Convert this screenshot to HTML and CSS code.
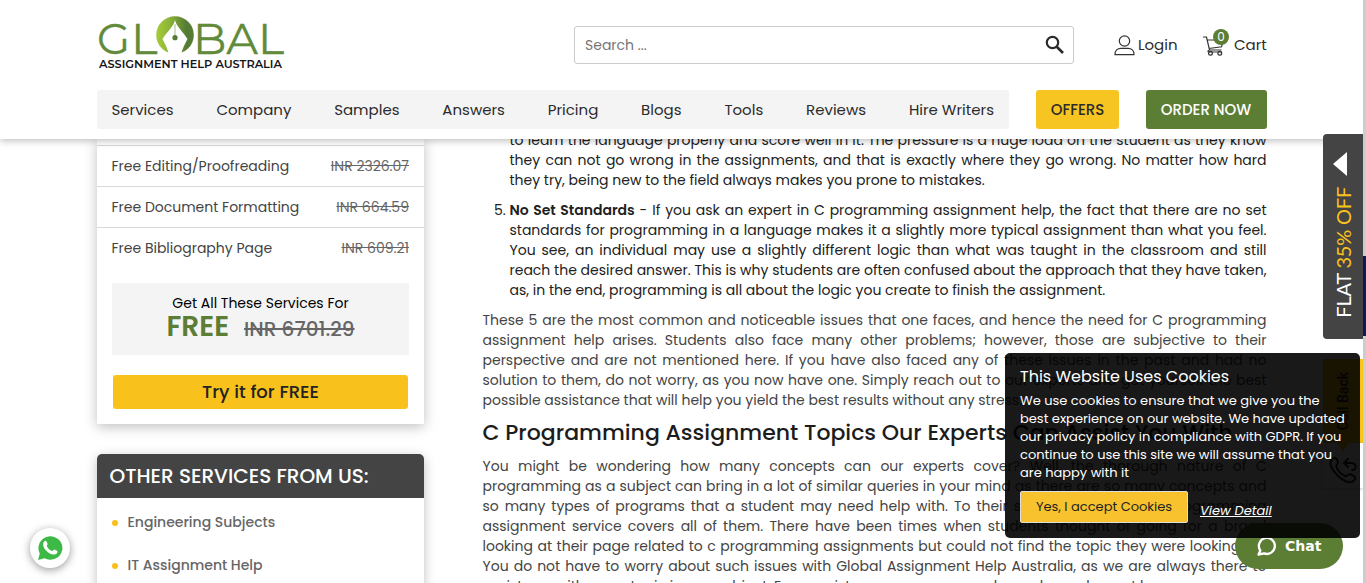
FILE: index.html
```html
<!DOCTYPE html>
<html lang="en">
<head>
<meta charset="utf-8">
<title>Global Assignment Help Australia</title>
<link rel="stylesheet" href="styles.css">
</head>
<body>
<header class="header">
  <div class="topbar">
    <svg class="logo" viewBox="0 0 188 58" width="188" height="58">
      <defs><linearGradient id="leaf"><stop offset="0" stop-color="#a5cc3b"/><stop offset=".35" stop-color="#8bb437"/><stop offset=".8" stop-color="#567b35"/></linearGradient></defs>
      <g class="logo-name"><text x="0" y="40.500" textLength="33" lengthAdjust="spacingAndGlyphs">G</text><text x="34" y="40.500" textLength="26.500" lengthAdjust="spacingAndGlyphs">L</text><text x="96" y="40.500" textLength="91" lengthAdjust="spacingAndGlyphs">BAL</text></g>
      <circle cx="78" cy="22" r="18.800" fill="url(#leaf)"/>
      <path d="M78 7C79 13 87 20 90.500 26C88 31 85.500 35 84 42H72C70.500 35 68 31 65.500 26C69 20 77 13 78 7Z" fill="#fff"/>
      <path d="M78 11V24" stroke="#a9bd8b"/><circle cx="78" cy="24.700" r="2.600" fill="#567b35"/>
    </svg>
    <div class="search"><span>Search ...</span>
      <svg width="20" height="20" viewBox="0 0 20 20" fill="none" stroke="#2b2b2b"><circle cx="7.500" cy="7.500" r="5.700" stroke-width="2.200"/><path d="M11.500 11.500L18 18" stroke-width="2.600"/></svg>
    </div>
    <div class="login">
      <svg width="21" height="21" viewBox="0 0 21 21" fill="none" stroke="#333" stroke-width="1.200"><circle cx="10.500" cy="6" r="5.200"/><path d="M1 19.700C.8 15.500 3.500 13.300 7 13.300H14C17.500 13.300 20.200 15.500 20 19.700Z"/></svg>
      <span>Login</span>
    </div>
    <div class="cart">
      <svg width="22" height="21" viewBox="0 0 22 21" fill="none" stroke="#333" stroke-width="1.200"><path d="M0 2H3.500L6.500 15H18.500M4.300 5H20L18.600 11.800L5.800 13.500M6.500 15C4.500 15.500 4.500 17 6 17H18.500"/><circle cx="7.500" cy="18.200" r="1.900"/><circle cx="16.800" cy="18.200" r="1.900"/></svg>
      <i class="badge">0</i><span>Cart</span>
    </div>
  </div>
  <div class="tagline">ASSIGNMENT HELP AUSTRALIA</div>
  <div class="navrow">
    <nav class="nav"><a>Services</a><a>Company</a><a>Samples</a><a>Answers</a><a>Pricing</a><a>Blogs</a><a>Tools</a><a>Reviews</a><a>Hire Writers</a></nav>
    <a class="btn offers">OFFERS</a><a class="btn order">ORDER NOW</a>
  </div>
</header>
<main class="main">
  <aside class="sidebar">
    <section class="card prices">
      <div class="row"><span>Free Editing/Proofreading</span><s>INR 2326.07</s></div>
      <div class="row"><span>Free Document Formatting</span><s>INR 664.59</s></div>
      <div class="row"><span>Free Bibliography Page</span><s>INR 609.21</s></div>
      <div class="total"><div>Get All These Services For</div><p><b>FREE</b><s>INR 6701.29</s></p></div>
      <a class="try">Try it for FREE</a>
    </section>
    <section class="card services">
      <h3>OTHER SERVICES FROM US:</h3>
      <ul><li>Engineering Subjects</li><li>IT Assignment Help</li></ul>
    </section>
  </aside>
  <article class="article">
    <div class="item">
      <span>to learn the language properly and score well in it. The pressure is a huge load on the student as they know</span>
      <span>they can not go wrong in the assignments, and that is exactly where they go wrong. No matter how hard</span>
      <span class="last">they try, being new to the field always makes you prone to mistakes.</span>
    </div>
    <div class="item">
      <em class="num">5.</em>
      <span><b>No Set Standards</b> - If you ask an expert in C programming assignment help, the fact that there are no set</span>
      <span>standards for programming in a language makes it a slightly more typical assignment than what you feel.</span>
      <span>You see, an individual may use a slightly different logic than what was taught in the classroom and still</span>
      <span>reach the desired answer. This is why students are often confused about the approach that they have taken,</span>
      <span class="last">as, in the end, programming is all about the logic you create to finish the assignment.</span>
    </div>
    <div class="para">
      <span>These 5 are the most common and noticeable issues that one faces, and hence the need for C programming</span>
      <span>assignment help arises. Students also face many other problems; however, those are subjective to their</span>
      <span>perspective and are not mentioned here. If you have also faced any of these issues in the past and had no</span>
      <span>solution to them, do not worry, as you now have one. Simply reach out to our experts and get yourself the best</span>
      <span class="last">possible assistance that will help you yield the best results without any stress.</span>
    </div>
    <h2>C Programming Assignment Topics Our Experts Can Assist You With</h2>
    <div class="para">
      <span>You might be wondering how many concepts can our experts cover? Well, the thorough nature of C</span>
      <span>programming as a subject can bring in a lot of similar queries in your mind as there are so many concepts and</span>
      <span>so many types of programs that a student may need help with. To their surprise, not every C programming</span>
      <span>assignment service covers all of them. There have been times when students thought of going for a brand</span>
      <span>looking at their page related to c programming assignments but could not find the topic they were looking for.</span>
      <span>You do not have to worry about such issues with Global Assignment Help Australia, as we are always there to</span>
      <span class="last">assist you with every topic in any subject. Even assistance on more complex code can be met here.</span>
    </div>
  </article>
</main>
<div class="scroll"><i></i></div>
<div class="flat"><svg width="14" height="24" viewBox="0 0 14 24"><path d="M0 12L14 0V24Z" fill="#fff"/></svg><div>FLAT <b>35% OFF</b></div></div>
<div class="callback"><div>Call Back</div></div>
<div class="phone"><svg width="28" height="28" viewBox="0 0 28 28" fill="none" stroke="#222" stroke-width="2" stroke-linejoin="round" stroke-linecap="round"><path d="M3 3C6 0 8 3 9 6C9.500 8 6.500 8.500 7.500 11C9 15 12 18 16 20C19 21 19 17.500 22 18.500C25 19.500 28 21.500 25 24.500C21 28.500 14 25 8.500 19.500C3 14 -1 7 3 3Z"/><path d="M16 7H22C28 7 28 15 23 14M19 3L15 7L19 11"/></svg></div>
<div class="chat"><svg width="20" height="20" viewBox="0 0 20 20" fill="none" stroke="#fff" stroke-width="2.300" stroke-linejoin="round"><path d="M1.500 18.500L3.300 14.500A8 8 0 1 1 7 17.400Z"/></svg><b>Chat</b></div>
<section class="cookies">
  <h4>This Website Uses Cookies</h4>
  <p>We use cookies to ensure that we give you the<br>best experience on our website. We have updated<br>our privacy policy in compliance with GDPR. If you<br>continue to use this site we will assume that you<br>are happy with it</p>
  <div class="actions"><a class="accept">Yes, I accept Cookies</a><a class="detail">View Detail</a></div>
</section>
<div class="whatsapp"><svg width="26" height="26" viewBox="0 0 26 26"><path d="M1 25L2.800 18.500A12 11.700 0 1 1 7.500 23.200Z" fill="#3cba45"/><path d="M6.500 7.500C8 4.500 9.500 5.500 10.500 8.500C11 10 9.200 10.200 10 11.500C11.500 14 13 15.300 15 16C16.300 16.200 16.500 14 18 14.800C20.500 16 21.500 16.800 19.500 18.700C16.500 21 12 18.500 9.300 15.700C6.500 13 5.500 10 6.500 7.500Z" fill="#fff"/></svg></div>
</body>
</html>
```
FILE: styles.css
```css
* { box-sizing: border-box; }
body { margin: 0; height: 583px; overflow: hidden; position: relative; background: #fff; color: #2b2b2b; font-family: Poppins, Inter, sans-serif; font-size: 14px; }
h2, h3, h4, p, ul { margin: 0; padding: 0; font-weight: 500; }
.header { position: relative; z-index: 2; height: 139px; padding: 13px 99px 0 97px; background: #fff; box-shadow: 0 2px 7px rgba(0,0,0,.25); }
.topbar { display: flex; height: 52px; }
.logo { flex: none; height: 58px; overflow: visible; }
.logo-name { font: 400 44px Montserrat, Lato, sans-serif; fill: #628a3b; stroke: #628a3b; stroke-width: .3; }
.tagline { width: 185px; height: 18px; padding-left: 2px; font: 600 11.3px/12px Montserrat, Inter, sans-serif; white-space: nowrap; color: #151515; margin-top: -7px; }
.search { width: 500px; height: 38px; margin: 13px 0 0 289px; padding: 0 8px 0 10px; border: 1px solid #ccc; border-radius: 3px; display: flex; justify-content: space-between; align-items: center; color: #757575; }
.login { display: flex; align-items: center; height: 38px; margin: 13px 0 0 40px; gap: 3px; font-size: 15px; width: 64px; white-space: nowrap; }
.login svg, .cart svg { flex: none; }
.login span, .cart span { padding-bottom: 2px; }
.cart { position: relative; display: flex; align-items: center; height: 38px; margin: 13px 0 0 25px; gap: 9px; font-size: 15px; }
.badge { position: absolute; left: 10px; top: 3px; width: 16px; height: 16px; border-radius: 8px; background: #5c7d34; color: #fff; font: 12px/16px Poppins, Inter, sans-serif; text-align: center; }
.navrow { display: flex; margin-top: 14px; }
.nav { display: flex; justify-content: space-between; align-items: center; width: 912px; height: 39px; padding: 0 15px 0 14.5px; border-radius: 3px; background: #f4f4f4; font-size: 15px; }
.btn { height: 39px; border-radius: 3px; font: 500 15px/39px Poppins, Inter, sans-serif; text-align: center; }
.offers { width: 83px; margin-left: 27px; background: #f7c521; }
.order { width: 121px; margin-left: 27px; padding-right: 1px; background: #5c7d34; color: #fff; }
.main { display: flex; height: 444px; overflow: hidden; padding-left: 97px; }
.sidebar { width: 327px; }
.card { box-shadow: 0 3px 12px rgba(0,0,0,.25); background: #fff; }
.prices { height: 285px; padding-top: 6px; }
.row { display: flex; justify-content: space-between; align-items: center; height: 41px; padding: 0 15px 0 14.5px; border-top: 1px solid #d8d8d8; color: #444; }
.row s { color: #666; }
.total { margin: 15px 15px 20px; height: 72px; padding-top: 11px; background: #f4f4f4; text-align: center; line-height: 18px; color: #000; }
.total p { display: flex; justify-content: center; align-items: center; gap: 15px; height: 28px; }
.total b { font-size: 28px; font-weight: 600; color: #5c7d34; padding-top: 2px; }
.total s { font-size: 20px; font-weight: 500; color: #666; padding-top: 5px; }
.try { display: block; height: 34px; margin: 0 16px; border-radius: 3px; background: #f9c11c; color: #222; font-size: 18px; font-weight: 500; line-height: 34px; text-align: center; }
.services { margin-top: 30px; height: 200px; border-radius: 5px 5px 0 0; }
.services h3 { height: 44px; padding-left: 12.5px; border-radius: 5px 5px 0 0; background: #444; color: #fff; font-size: 20px; line-height: 44px; white-space: nowrap; }
.services ul { list-style: none; padding: 3px 0 0 15px; }
.services li { display: flex; align-items: center; gap: 9.5px; height: 43px; color: #666; font-weight: 500; }
.services li::before { content: ""; width: 6px; height: 6px; border-radius: 3px; background: #fabf19; }
.article { width: 784px; margin: -9px 0 0 58.5px; line-height: 20px; }
.article span { display: block; height: 20px; white-space: nowrap; text-align-last: justify; }
.article .last { text-align-last: left; }
.item { position: relative; margin: 0 0 10px 27px; color: #212121; }
.item b { font-weight: 600; }
.num { position: absolute; left: -15.5px; top: 0; font-style: normal; }
.para { color: #444; }
.article h2 { height: 46px; width: 750px; line-height: 46px; font-size: 22px; white-space: nowrap; text-align-last: justify; color: #1c1c1c; }
.scroll { position: absolute; z-index: 2; right: 0; top: 0; width: 3px; height: 583px; padding-top: 256px; background: #cdcdcd; }
.scroll i { display: block; height: 80px; background: #131850; }
.flat { position: absolute; z-index: 3; right: 3px; top: 134px; width: 40px; height: 205px; padding: 18px 10px; border-radius: 4px 0 0 4px; background: #444; color: #fff; }
.flat svg { display: block; }
.flat div { writing-mode: vertical-rl; transform: rotate(180deg); margin-top: 11px; font: 20px/20px Lato, sans-serif; letter-spacing: -.2px; white-space: nowrap; }
.flat b { font-weight: 400; color: #f9c11c; }
.callback { position: absolute; right: 3px; top: 359px; width: 40px; height: 84px; background: #fcc419; color: #222; }
.callback::after { content: ""; position: absolute; top: 84px; left: 14px; border: 6px solid transparent; border-top: 9px solid #fcc419; }
.callback div { writing-mode: vertical-rl; transform: rotate(180deg); margin: 13px 11px; font: 500 14px/18px Roboto, sans-serif; white-space: nowrap; }
.phone { position: absolute; right: 3px; top: 443px; width: 40px; height: 45px; padding: 13px 6px; box-shadow: 0 1px 4px rgba(0,0,0,.25); }
.chat { position: absolute; left: 1235px; top: 523px; width: 108px; height: 46px; border-radius: 23px; background: #5c7d34; color: #fff; display: flex; align-items: center; padding-left: 22px; gap: 8px; font: 700 14px "DejaVu Sans", "Noto Sans", sans-serif; }
.cookies { position: absolute; z-index: 4; left: 1005px; top: 353px; width: 355px; height: 185px; padding: 14px 15px; border-radius: 5px; background: rgba(0,0,0,.9); color: #fff; white-space: nowrap; }
.cookies h4 { font-size: 16px; line-height: 20px; font-weight: 400; height: 25px; }
.cookies p { font-size: 13px; font-weight: 400; line-height: 18px; }
.actions { display: flex; gap: 12px; margin-top: 9px; }
.accept { width: 168px; height: 32px; border: 1px solid #ddd; border-radius: 2px; background: rgba(255,200,48,.97); color: #222; font-size: 13px; line-height: 30px; text-align: center; }
.detail { font-size: 13px; line-height: 40px; font-style: italic; text-decoration: underline; }
.whatsapp { position: absolute; z-index: 3; left: 30px; top: 528px; width: 40px; height: 40px; border-radius: 20px; padding: 7px; background: #fff; box-shadow: 0 2px 8px rgba(0,0,0,.4); }
```
